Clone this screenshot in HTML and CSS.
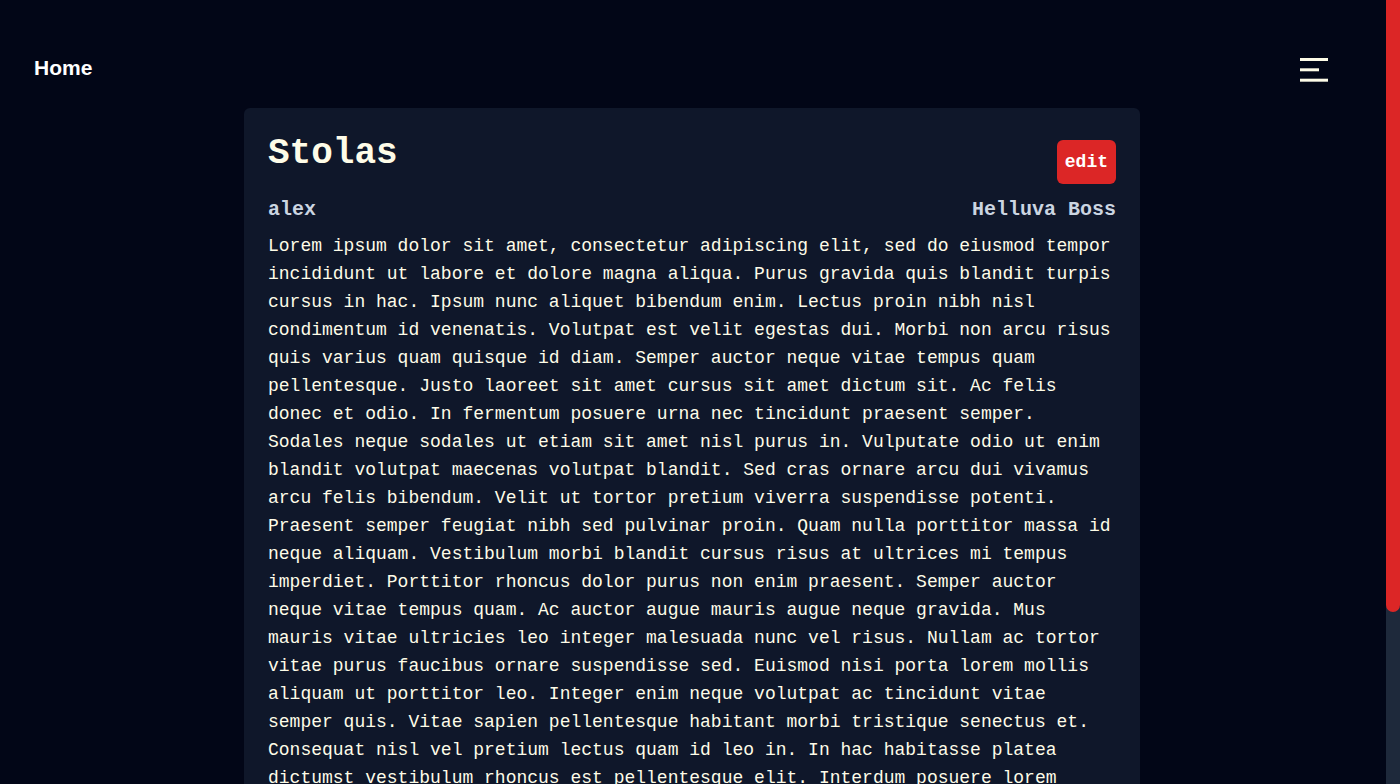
FILE: index.html
```html
<!DOCTYPE html>
<html lang="en">
<head>
<meta charset="utf-8">
<title>Stolas</title>
<link rel="stylesheet" href="styles.css">
</head>
<body>
<nav class="nav">
  <a class="home" href="#">Home</a>
  <button class="menu" aria-label="menu">
    <svg width="28" height="24" viewBox="0 0 28 24"><line x1="0" y1="1.5" x2="28" y2="1.5"/><line x1="0" y1="11.8" x2="19" y2="11.8"/><line x1="0" y1="22.2" x2="28" y2="22.2"/></svg>
  </button>
</nav>
<main class="main">
  <article class="card">
    <header class="card-head">
      <h1 class="title">Stolas</h1>
      <button class="edit">edit</button>
    </header>
    <div class="meta">
      <span>alex</span>
      <span>Helluva Boss</span>
    </div>
    <p class="body">Lorem ipsum dolor sit amet, consectetur adipiscing elit, sed do eiusmod tempor incididunt ut labore et dolore magna aliqua. Purus gravida quis blandit turpis cursus in hac. Ipsum nunc aliquet bibendum enim. Lectus proin nibh nisl condimentum id venenatis. Volutpat est velit egestas dui. Morbi non arcu risus quis varius quam quisque id diam. Semper auctor neque vitae tempus quam pellentesque. Justo laoreet sit amet cursus sit amet dictum sit. Ac felis donec et odio. In fermentum posuere urna nec tincidunt praesent semper. Sodales neque sodales ut etiam sit amet nisl purus in. Vulputate odio ut enim blandit volutpat maecenas volutpat blandit. Sed cras ornare arcu dui vivamus arcu felis bibendum. Velit ut tortor pretium viverra suspendisse potenti. Praesent semper feugiat nibh sed pulvinar proin. Quam nulla porttitor massa id neque aliquam. Vestibulum morbi blandit cursus risus at ultrices mi tempus imperdiet. Porttitor rhoncus dolor purus non enim praesent. Semper auctor neque vitae tempus quam. Ac auctor augue mauris augue neque gravida. Mus mauris vitae ultricies leo integer malesuada nunc vel risus. Nullam ac tortor vitae purus faucibus ornare suspendisse sed. Euismod nisi porta lorem mollis aliquam ut porttitor leo. Integer enim neque volutpat ac tincidunt vitae semper quis. Vitae sapien pellentesque habitant morbi tristique senectus et. Consequat nisl vel pretium lectus quam id leo in. In hac habitasse platea dictumst vestibulum rhoncus est pellentesque elit. Interdum posuere lorem ipsum dolor sit amet consectetur adipiscing elit. Dui accumsan sit amet nulla facilisi morbi tempus iaculis. Nunc sed id semper risus in hendrerit gravida rutrum quisque. Amet venenatis urna cursus eget nunc scelerisque viverra mauris in. Tellus rutrum tellus pellentesque eu tincidunt tortor aliquam nulla. Et ligula ullamcorper malesuada proin libero nunc consequat interdum. Viverra nam libero justo laoreet sit amet cursus sit amet.</p>
  </article>
</main>
<div class="scrollbar" aria-hidden="true"><div class="scrollbar-thumb"></div></div>
</body>
</html>
```
FILE: styles.css
```css
html { background: #020617; scrollbar-width: none; }
::-webkit-scrollbar { display: none; }

body {
  margin: 0 14px 0 0;
  background: #020617;
  color: #fefce8;
  font-family: "Liberation Mono", monospace;
}

.scrollbar {
  position: fixed;
  top: 0;
  right: 0;
  width: 14px;
  height: 100vh;
  background: #1e293b;
}
.scrollbar-thumb {
  height: 612px;
  background: #dc2626;
  border-radius: 0 0 7px 7px;
}

.nav {
  display: flex;
  justify-content: space-between;
  align-items: flex-start;
  padding: 54px 32px 26px 34px;
}

.home {
  font-family: "Liberation Sans", Arial, sans-serif;
  font-weight: 700;
  font-size: 21px;
  line-height: 28px;
  color: #ffffff;
  text-decoration: none;
}

.menu {
  background: none;
  border: 0;
  padding: 0;
  margin: 3.7px 26px 0 0;
  display: block;
  line-height: 0;
}
.menu svg { display: block; }
.menu line { stroke: #fefce8; stroke-width: 3; }

.main {
  display: flex;
  justify-content: center;
  padding: 0 2px 20px 0;
}

.card {
  width: 896px;
  box-sizing: border-box;
  background: #0f172a;
  border-radius: 6px;
  padding: 24px;
}

.card-head {
  display: flex;
  justify-content: space-between;
  align-items: flex-start;
  height: 52px;
  margin-bottom: 12px;
}

.title {
  margin: 0;
  font-size: 36px;
  line-height: 43.2px;
  font-weight: 700;
  color: #fefce8;
}

.edit {
  margin-top: 8px;
  background: #dc2626;
  color: #ffffff;
  border: 0;
  border-radius: 6px;
  padding: 8px;
  font-family: "Liberation Mono", monospace;
  font-weight: 700;
  font-size: 18px;
  line-height: 28px;
}

.meta {
  display: flex;
  justify-content: space-between;
  font-size: 20px;
  line-height: 28px;
  font-weight: 700;
  color: #cbd5e1;
  margin-bottom: 8px;
}

.body {
  margin: 0;
  font-size: 18px;
  line-height: 28px;
  color: #fefce8;
}
```
